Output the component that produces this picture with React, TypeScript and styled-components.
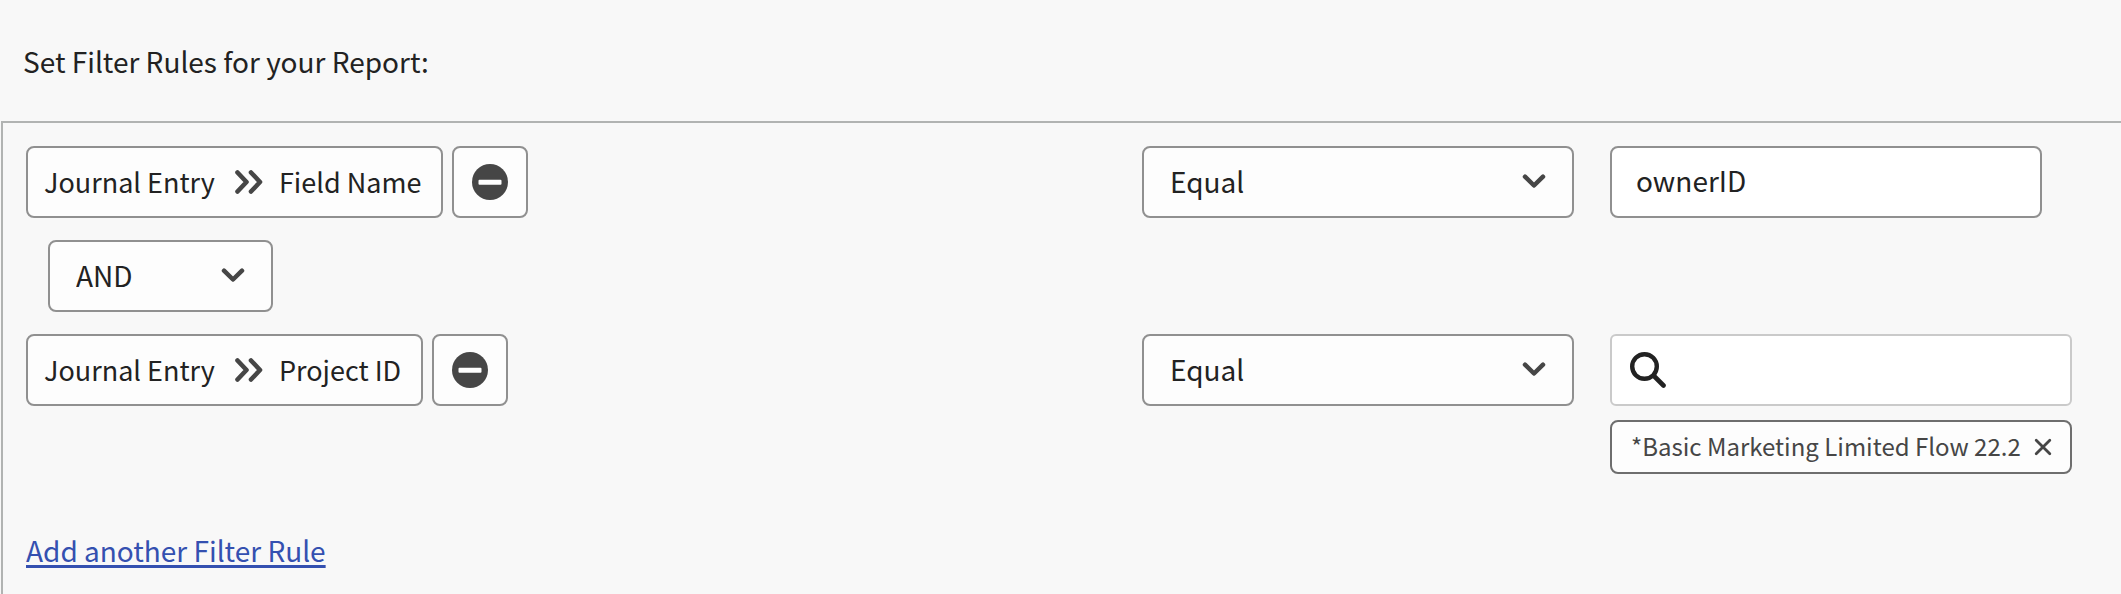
import React, { useState } from "react";
import styled, { createGlobalStyle } from "styled-components";

const GlobalStyle = createGlobalStyle`
  *, *::before, *::after { box-sizing: border-box; }
  html, body, #root { height: 100%; }
  body {
    margin: 0;
    background: #f8f8f8;
    color: #222222;
    font-family: "Noto Sans CJK SC", "Noto Sans", sans-serif;
    font-size: 28px;
    line-height: 40px;
  }
  button, input, select { font: inherit; color: inherit; }
`;

const Page = styled.main`
  display: flex;
  flex-direction: column;
  min-height: 100%;
`;

const Title = styled.h1`
  margin: 0;
  padding: 41px 23px 40px;
  font-size: 28px;
  font-weight: 400;
  line-height: 40px;
`;

const Panel = styled.section`
  flex: 1;
  display: flex;
  flex-direction: column;
  align-items: stretch;
  gap: 22px;
  margin-left: 1px;
  padding: 23px 49px 22px 23px;
  border: solid #b1b3b2;
  border-width: 2px 0 0 2px;
`;

const Rule = styled.div`
  display: grid;
  grid-template-columns: minmax(0, 1fr) 432px 462px;
  column-gap: 36px;
  align-items: start;
`;

const FieldGroup = styled.div`
  display: flex;
  gap: 9px;
`;

const FieldButton = styled.button`
  display: flex;
  align-items: center;
  height: 72px;
  padding: 0 20px 0 16px;
  border: 2px solid #909090;
  border-radius: 8px;
  background: #fdfdfd;
  font-size: 27px;
  white-space: nowrap;

  svg { margin: 0 16px 0 20px; }
`;

const RemoveButton = styled.button`
  display: flex;
  align-items: center;
  justify-content: center;
  width: 76px;
  height: 72px;
  padding: 0;
  border: 2px solid #909090;
  border-radius: 8px;
  background: #fdfdfd;
`;

const SelectBox = styled.div<{ $width?: string; $inset?: string }>`
  position: relative;
  width: ${(p) => p.$width ?? "100%"};
  margin-left: ${(p) => p.$inset ?? "0"};

  svg {
    position: absolute;
    top: 28px;
    right: 28px;
    pointer-events: none;
  }
`;

const Select = styled.select`
  display: block;
  appearance: none;
  width: 100%;
  height: 72px;
  padding: 0 64px 2px 26px;
  border: 2px solid #909090;
  border-radius: 8px;
  background: #fdfdfd;
`;

const TextInput = styled.input`
  width: 432px;
  height: 72px;
  padding: 0 24px 4px;
  border: 2px solid #909090;
  border-radius: 8px;
  background: #ffffff;
`;

const ValueStack = styled.div`
  display: flex;
  flex-direction: column;
  gap: 14px;
`;

const SearchBox = styled.label`
  display: flex;
  align-items: center;
  gap: 16px;
  height: 72px;
  padding: 0 18px;
  border: 2px solid #cacaca;
  border-radius: 6px;
  background: #ffffff;
`;

const SearchInput = styled.input`
  flex: 1;
  min-width: 0;
  padding: 0;
  border: 0;
  outline: 0;
  background: transparent;
`;

const Chip = styled.div`
  display: flex;
  align-items: center;
  justify-content: space-between;
  height: 54px;
  padding: 0 18px 2px 19px;
  border: 2px solid #6e6e6e;
  border-radius: 8px;
  background: #fdfdfd;
  color: #464646;
  font-size: 24px;
  line-height: 36px;
  white-space: nowrap;
`;

const ChipClose = styled.button`
  display: flex;
  padding: 2px 0 0;
  border: 0;
  background: none;
`;

const AddLink = styled.a`
  align-self: flex-start;
  margin-top: 34px;
  color: #3450b0;
  text-decoration: underline;
  text-decoration-thickness: 3px;
  text-underline-offset: 3px;
  text-decoration-skip-ink: none;
`;

const DoubleChevron = () => (
  <svg width="28" height="24" viewBox="0 0 28 24" fill="none" stroke="#464646" strokeWidth="4.600" strokeLinecap="round" strokeLinejoin="round" aria-hidden="true">
    <path d="M2.500 2.500 11.500 12l-9 9.500M16 2.500 25 12 16 21.500" />
  </svg>
);

const Chevron = () => (
  <svg width="24" height="15" viewBox="0 0 24 15" fill="none" stroke="#464646" strokeWidth="4.500" strokeLinecap="round" strokeLinejoin="round" aria-hidden="true">
    <path d="M3 2.700 12 11.500 21 2.700" />
  </svg>
);

const MinusCircle = () => (
  <svg width="36" height="36" viewBox="0 0 36 36" aria-hidden="true">
    <circle cx="18" cy="18" r="18" fill="#464646" />
    <rect x="6.500" y="15.700" width="23" height="5" rx="1" fill="#ffffff" />
  </svg>
);

const SearchIcon = () => (
  <svg width="36" height="36" viewBox="0 0 36 36" fill="none" stroke="#222222" strokeLinecap="round" aria-hidden="true">
    <circle cx="14.500" cy="14.500" r="12.300" strokeWidth="4.400" />
    <path d="M24 24l9.500 9.500" strokeWidth="4.600" />
  </svg>
);

const CloseIcon = () => (
  <svg width="18" height="18" viewBox="0 0 18 18" fill="none" stroke="#464646" strokeWidth="2.800" strokeLinecap="round" aria-hidden="true">
    <path d="M2.200 2.200l13.600 13.600M15.800 2.200 2.200 15.800" />
  </svg>
);

const FieldPicker = ({ source, field }: { source: string; field: string }) => (
  <FieldGroup>
    <FieldButton type="button">
      <span>{source}</span>
      <DoubleChevron />
      <span>{field}</span>
    </FieldButton>
    <RemoveButton type="button" aria-label={`Remove ${field}`}>
      <MinusCircle />
    </RemoveButton>
  </FieldGroup>
);

type DropdownProps = { label: string; options: string[]; width?: string; inset?: string };

const Dropdown = ({ label, options, width, inset }: DropdownProps) => (
  <SelectBox $width={width} $inset={inset}>
    <Select aria-label={label} defaultValue={options[0]}>
      {options.map((o) => (
        <option key={o}>{o}</option>
      ))}
    </Select>
    <Chevron />
  </SelectBox>
);

const operators = ["Equal", "Not Equal"];

export default function App() {
  const [owner, setOwner] = useState("ownerID");
  return (
    <>
      <GlobalStyle />
      <Page>
        <Title>Set Filter Rules for your Report:</Title>
        <Panel>
          <Rule>
            <FieldPicker source="Journal Entry" field="Field Name" />
            <Dropdown label="Field Name operator" options={operators} />
            <TextInput aria-label="Field Name value" value={owner} onChange={(e) => setOwner(e.target.value)} />
          </Rule>
          <Dropdown label="Rule connector" options={["AND", "OR"]} width="225px" inset="22px" />
          <Rule>
            <FieldPicker source="Journal Entry" field="Project ID" />
            <Dropdown label="Project ID operator" options={operators} />
            <ValueStack>
              <SearchBox>
                <SearchIcon />
                <SearchInput type="text" aria-label="Search projects" />
              </SearchBox>
              <Chip>
                <span>*Basic Marketing Limited Flow 22.2</span>
                <ChipClose type="button" aria-label="Remove project">
                  <CloseIcon />
                </ChipClose>
              </Chip>
            </ValueStack>
          </Rule>
          <AddLink href="#add-rule">Add another Filter Rule</AddLink>
        </Panel>
      </Page>
    </>
  );
}
